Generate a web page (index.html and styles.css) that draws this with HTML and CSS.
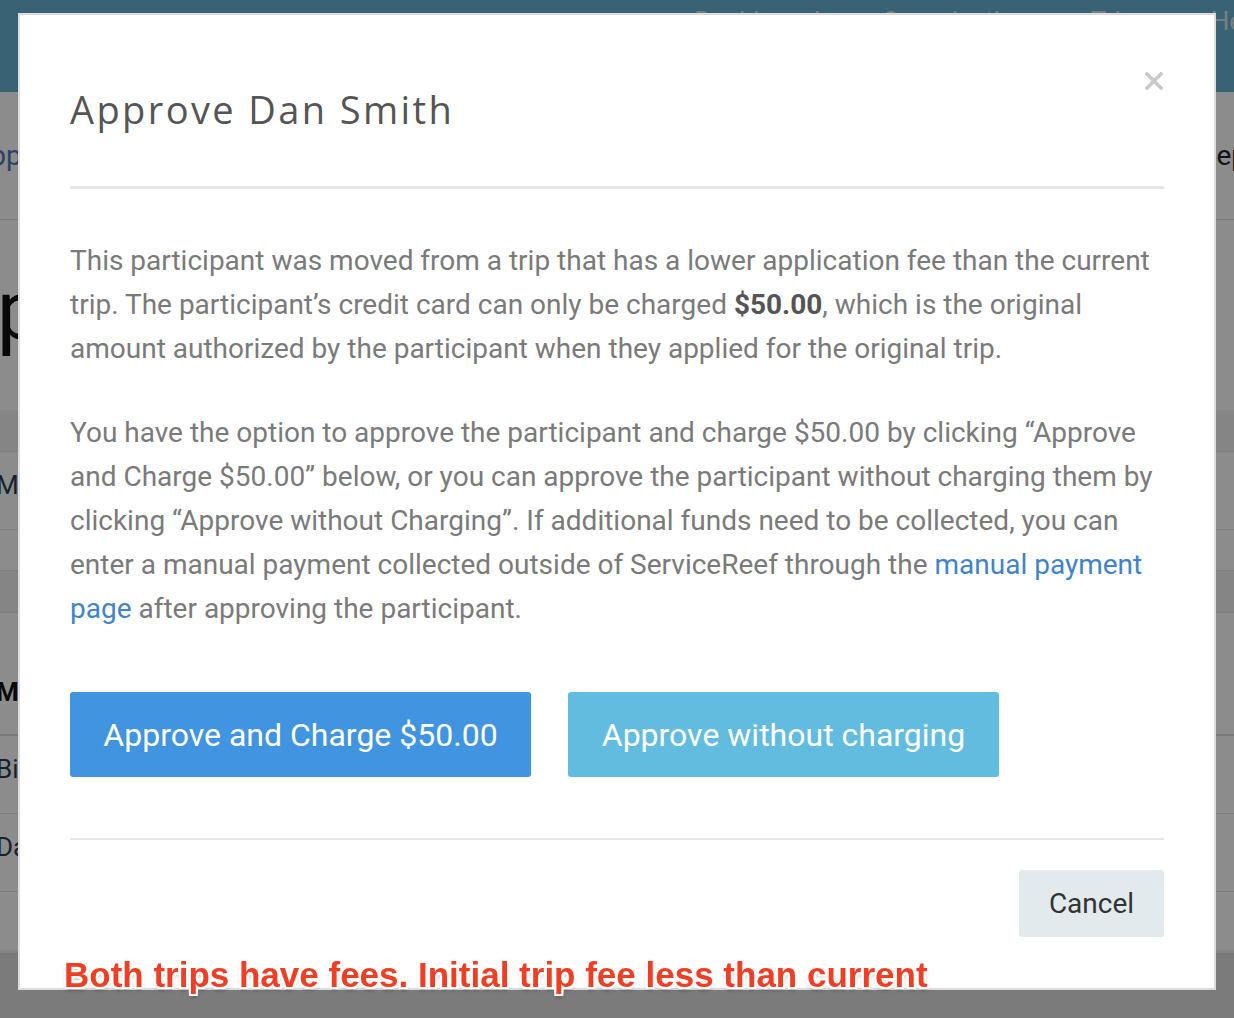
FILE: index.html
```html
<!DOCTYPE html>
<html lang="en">
  <head>
    <meta charset="UTF-8" />
    <title>Approve Dan Smith</title>
    <link rel="stylesheet" href="styles.css">
  </head>
  <body>
    <div class="page">
      <header class="topbar">
        <nav class="topnav">
          <a>Dashboard</a>
          <a>Organization</a>
          <a>Trips</a>
          <a>Help</a>
        </nav>
      </header>
      <div class="subnav">
        <span class="crumb">Apps</span>
        <span class="crumb-right">Rep</span>
      </div>
      <div class="hero"><span class="hero-title">Approve</span></div>
      <div class="band"></div>
      <div class="row row-tall"><span class="cell">Ma</span></div>
      <div class="row row-short"></div>
      <div class="band"></div>
      <div class="table-head"><span class="cell cell-bold">Mo</span></div>
      <div class="row row-tall"><span class="cell">Bill</span></div>
      <div class="row row-tall"><span class="cell">Dan</span></div>
      <div class="row row-last"></div>
    </div>

    <div class="backdrop"></div>

    <!-- Approve modal -->
    <div class="modal">
      <div class="modal-header">
        <h2 class="modal-title">Approve Dan Smith</h2>
        <button class="close" aria-label="Close">
          <svg width="18" height="18" viewBox="0 0 18 18">
            <path d="M2 2 L16 16 M16 2 L2 16" stroke="#c9c9c9" stroke-width="3.6" stroke-linecap="square" />
          </svg>
        </button>
      </div>
      <div class="modal-body">
        <p>
          This participant was moved from a trip that has a lower application fee than the current
          trip. The participant’s credit card can only be charged <strong>$50.00</strong>, which is the original
          amount authorized by the participant when they applied for the original trip.
        </p>
        <p>
          You have the option to approve the participant and charge $50.00 by clicking “Approve
          and Charge $50.00” below, or you can approve the participant without charging them by
          clicking “Approve without Charging”. If additional funds need to be collected, you can
          enter a manual payment collected outside of ServiceReef through the
          <a class="link">manual payment page</a> after approving the participant.
        </p>
        <div class="actions">
          <button class="btn btn-primary">Approve and Charge $50.00</button>
          <button class="btn btn-info">Approve without charging</button>
        </div>
      </div>
      <div class="modal-footer">
        <button class="btn btn-default">Cancel</button>
      </div>
    </div>

    <div class="note">Both trips have fees. Initial trip fee less than current</div>
  </body>
</html>
```

FILE: styles.css
```css
body {
  margin: 0;
  padding: 0;
  font-family: Roboto, "Liberation Sans", sans-serif;
  background-color: #eee;
  overflow: hidden;
}
.page {
  width: 1234px;
  height: 1018px;
  background-color: #eeeeee;
}
.topbar {
  height: 92px;
  background-color: #6bb2d5;
}
.topnav {
  display: flex;
  justify-content: flex-end;
  gap: 62px;
  padding: 6px 0 0 0;
  margin-right: -30px;
  font-size: 26px;
  color: #dde6ea;
}
.subnav {
  height: 127px;
  background-color: #ffffff;
  border-bottom: 1px solid #e1e1e1;
  display: flex;
  justify-content: space-between;
  align-items: center;
  font-size: 28px;
}
.crumb {
  margin-left: -28px;
  color: #4a7ab8;
}
.crumb-right {
  margin-right: -13px;
  color: #223;
}
.hero {
  height: 190px;
  background-color: #ffffff;
  display: flex;
  align-items: center;
}
.hero-title {
  margin-left: -58px;
  font-size: 84px;
  color: #111;
  margin-top: -10px;
}
.band {
  height: 41px;
  background-color: #f3f3f3;
  border-bottom: 1px solid #e6e6e6;
}
.row {
  background-color: #ffffff;
  border-bottom: 1px solid #e4e4e4;
  display: flex;
  align-items: center;
}
.row-tall {
  height: 77px;
}
.row-short {
  height: 40px;
}
.row-last {
  height: 61px;
}
.table-head {
  height: 121px;
  background-color: #ffffff;
  border-bottom: 2px solid #dddddd;
  display: flex;
  align-items: flex-end;
}
.cell {
  margin-left: -4px;
  margin-top: -12px;
  font-size: 26px;
  color: #2d3b52;
}
.table-head .cell {
  margin-bottom: 27px;
}
.cell-bold {
  font-weight: bold;
  color: #111;
}
.backdrop {
  position: fixed;
  top: 0;
  left: 0;
  width: 100%;
  height: 100%;
  background-color: rgba(0, 0, 0, 0.45);
}
.backdrop::after {
  content: "";
  position: absolute;
  left: 0;
  right: 0;
  top: 950px;
  bottom: 0;
  background-color: rgba(0, 0, 0, 0.06);
}
.modal {
  position: fixed;
  top: 13px;
  left: 18px;
  width: 1198px;
  box-sizing: border-box;
  background-color: #ffffff;
  border: 2px solid #dcdcdc;
  padding: 0 50px;
}
.modal-header {
  position: relative;
  padding: 72px 0 55px;
  border-bottom: 3px solid #e6e6e6;
}
.modal-title {
  margin: 0;
  font-family: "Open Sans", "Noto Sans", sans-serif;
  font-weight: normal;
  font-size: 38px;
  line-height: 44px;
  letter-spacing: 2.4px;
  color: #555;
}
.close {
  position: absolute;
  top: 57px;
  right: 1px;
  padding: 0;
  border: none;
  background: none;
  width: 18px;
  height: 18px;
  display: block;
}
.close svg {
  display: block;
}
.modal-body {
  padding: 50px 0 0;
}
.modal-body p {
  margin: 0 0 40px;
  font-size: 28px;
  line-height: 44px;
  color: #7a7a7a;
}
.modal-body strong {
  color: #555;
}
.link {
  color: #3f84cb;
}
.actions {
  display: flex;
  gap: 37px;
  margin-top: 61px;
  padding-bottom: 61px;
  border-bottom: 2px solid #e6e6e6;
}
.btn {
  font-family: Roboto, "Liberation Sans", sans-serif;
  border: none;
  border-radius: 3px;
  cursor: pointer;
}
.btn-primary,
.btn-info {
  height: 85px;
  padding: 0 30px;
  font-size: 32px;
  color: #ffffff;
}
.btn-primary {
  width: 461px;
  background-color: #4194df;
}
.btn-info {
  width: 431px;
  background-color: #62bce0;
}
.modal-footer {
  display: flex;
  justify-content: flex-end;
  padding: 30px 0 51px;
}
.btn-default {
  width: 145px;
  height: 67px;
  font-size: 28px;
  color: #333;
  background-color: #e3eaee;
}
.note {
  position: fixed;
  left: 64px;
  top: 955px;
  font-family: "Liberation Sans", Arial, sans-serif;
  font-weight: bold;
  font-size: 35px;
  color: #ee3e24;
  text-shadow:
    -2px 0 0 #fff, 2px 0 0 #fff, 0 -2px 0 #fff, 0 2px 0 #fff,
    -2px -2px 0 #fff, 2px 2px 0 #fff, -2px 2px 0 #fff, 2px -2px 0 #fff,
    0 3px 4px rgba(0, 0, 0, 0.35);
}
```
